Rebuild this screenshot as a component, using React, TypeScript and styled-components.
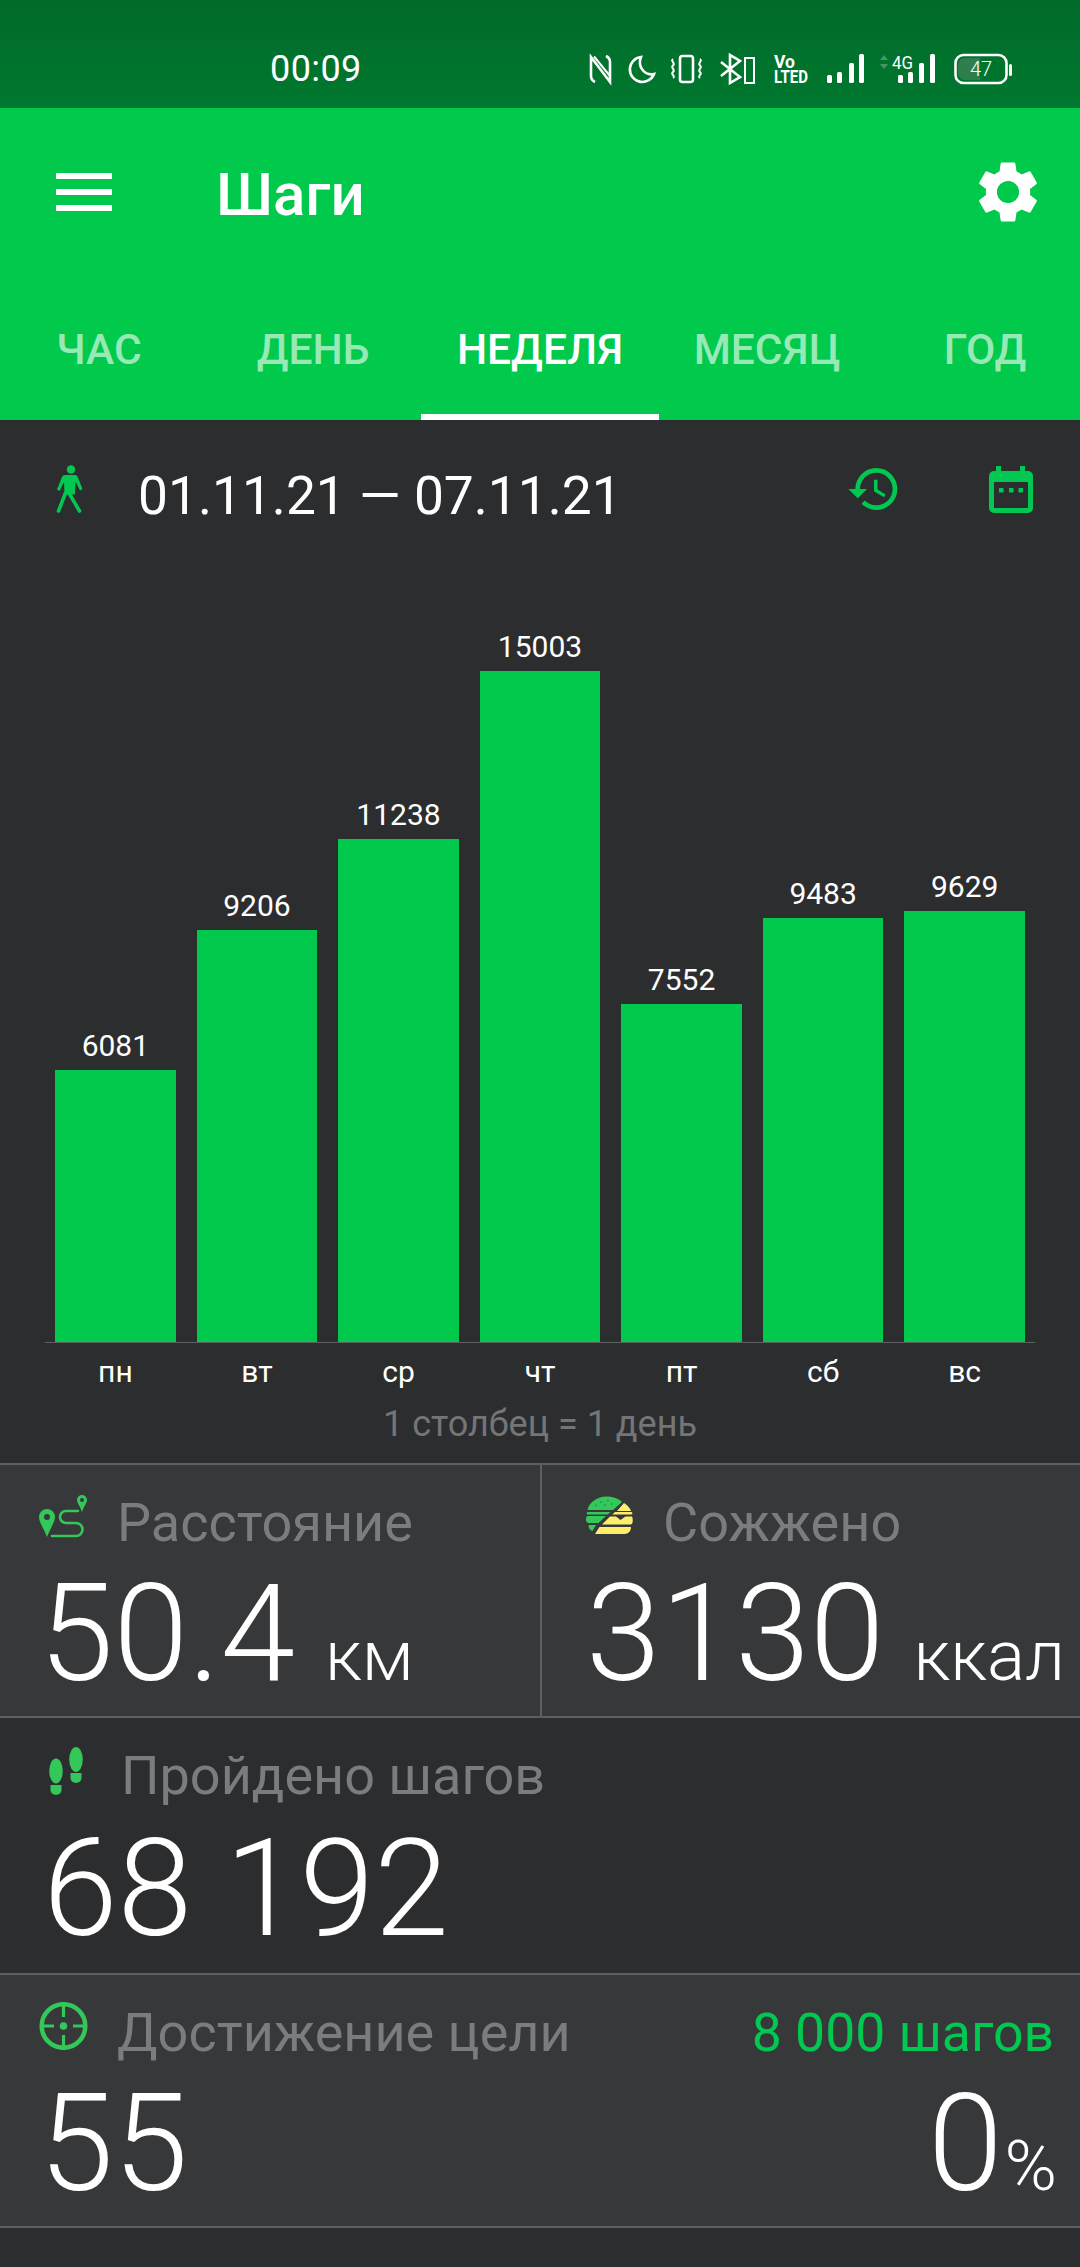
import React from "react";
import styled, { createGlobalStyle } from "styled-components";
import { MdSettings, MdHistory } from "react-icons/md";

const Global = createGlobalStyle`
  html, body { margin: 0; padding: 0; background: #2c2d2f; }
  * { box-sizing: border-box; }
`;

const Page = styled.div`
  width: 1080px;
  height: 2267px;
  overflow: hidden;
  background: #2c2d2f;
  font-family: Roboto, "Noto Sans", sans-serif;
  color: #fff;
`;

const StatusBar = styled.div`
  height: 108px;
  background: linear-gradient(180deg, #006b2a 0%, #00782f 100%);
  display: flex;
  align-items: center;
  padding: 28px 0 0 270px;
`;
const Clock = styled.div`
  font-size: 36px;
  line-height: 44px;
  margin: 2px 216px 0 0;
  letter-spacing: 0.4px;
`;
const StatusIcons = styled.svg`
  width: 440px;
  height: 44px;
  display: block;
  margin-left: auto;
  margin-right: 60px;
`;

const Header = styled.div`
  background: #00c94c;
`;
const Toolbar = styled.div`
  height: 160px;
  display: flex;
  align-items: center;
  padding: 0 35px 0 56px;
`;
const Burger = styled.div`
  width: 56px;
  height: 38px;
  display: flex;
  flex-direction: column;
  justify-content: space-between;
  margin-top: 8px;
  span { display: block; height: 6px; background: #fff; }
`;
const Title = styled.div`
  font-size: 60px;
  font-weight: 500;
  line-height: 70px;
  margin-left: 104px;
  margin-top: 14px;
  flex: 1;
`;
const Gear = styled(MdSettings)`
  width: 74px;
  height: 74px;
  margin-top: 8px;
  color: #fff;
  display: block;
`;
const Tabs = styled.div`
  height: 152px;
  display: flex;
`;
const Tab = styled.div<{ $w: number; $active?: boolean; $shift?: number }>`
  flex: 0 0 ${(p) => p.$w}px;
  height: 152px;
  padding: 58px 0 0 ${(p) => p.$shift ?? 0}px;
  text-align: center;
  font-size: 42.5px;
  line-height: 48px;
  font-weight: 500;
  color: ${(p) => (p.$active ? "#fff" : "rgba(255,255,255,0.6)")};
  border-bottom: 6px solid ${(p) => (p.$active ? "#fff" : "transparent")};
`;

const DateRow = styled.div`
  height: 110px;
  display: flex;
  align-items: center;
  padding: 28px 47px 0 56px;
`;
const DateText = styled.div`
  font-size: 53.3px;
  line-height: 64px;
  margin-left: 55px;
  flex: 1;
  margin-top: 14px;
`;
const HistoryIcon = styled(MdHistory)`
  width: 56px;
  height: 56px;
  color: #00c850;
  display: block;
  margin-right: 87px;
`;
const SmallIcon = styled.svg<{ $top?: number; $left?: number }>`
  display: block;
  flex: none;
  margin-top: ${(p) => p.$top ?? 0}px;
  margin-left: ${(p) => p.$left ?? 0}px;
`;

const Chart = styled.div`
  height: 813px;
  padding: 0 45px;
  display: flex;
  align-items: flex-end;
`;
const Plot = styled.div`
  width: 990px;
  display: flex;
  gap: 20.8px;
  padding: 0 10px;
  border-bottom: 1px solid #5e6062;
  align-items: flex-end;
`;
const Col = styled.div`
  flex: 1;
  display: flex;
  flex-direction: column;
  align-items: center;
`;
const Val = styled.div`
  font-size: 30px;
  line-height: 36px;
  margin-bottom: 6px;
`;
const Bar = styled.div`
  width: 100%;
  background: #00c94c;
`;
const Days = styled.div`
  display: flex;
  gap: 20.8px;
  padding: 0 55px;
  height: 47px;
  align-items: flex-end;
`;
const Day = styled.div`
  flex: 1;
  text-align: center;
  font-size: 30px;
  line-height: 36px;
`;
const Hint = styled.div`
  height: 73px;
  padding-top: 14px;
  text-align: center;
  font-size: 36px;
  line-height: 40px;
  color: #737577;
`;

const Section = styled.div<{ $h: number; $light?: boolean }>`
  height: ${(p) => p.$h}px;
  border-top: 2px solid #5d5f61;
  background: ${(p) => (p.$light ? "#36383a" : "#2c2d2f")};
  display: flex;
`;
const Cell = styled.div<{ $w?: number; $pad?: number; $divider?: boolean }>`
  ${(p) => (p.$w ? `flex: 0 0 ${p.$w}px;` : "flex: 1;")}
  padding: 0 0 0 ${(p) => p.$pad ?? 39}px;
  ${(p) => (p.$divider ? "border-right: 2px solid #5d5f61;" : "")}
  min-width: 0;
`;
const LabelRow = styled.div`
  height: 84px;
  display: flex;
  align-items: center;
  padding-top: 28px;
`;
const Label = styled.div<{ $gap: number }>`
  font-size: 54px;
  line-height: 60px;
  color: #7b7c7e;
  margin-left: ${(p) => p.$gap}px;
  flex: 1;
  margin-top: 4px;
`;
const Goal = styled.div`
  font-size: 53.5px;
  line-height: 60px;
  color: #00c850;
  margin-top: 4px;
  margin-right: 26px;
`;
const ValueRow = styled.div<{ $top: number; $left: number; $right?: number; $between?: boolean }>`
  display: flex;
  align-items: baseline;
  padding: ${(p) => p.$top}px ${(p) => p.$right ?? 27}px 0 ${(p) => p.$left}px;
  white-space: nowrap;
  ${(p) => (p.$between ? "justify-content: space-between;" : "")}
`;
const Big = styled.div`
  font-size: 134.5px;
  line-height: 130px;
  font-weight: 300;
`;
const Unit = styled.div<{ $gap: number }>`
  font-size: 71px;
  font-weight: 300;
  margin-left: ${(p) => p.$gap}px;
`;
const Pair = styled.div`
  display: flex;
  align-items: baseline;
`;

const GREEN = "#00c850";
const SOFT = "#34c759";
const YELLOW = "#ffee6b";

const WalkIcon = () => (
  <SmallIcon width="27" height="48" viewBox="0 0 27 48">
    <circle cx="15" cy="4.500" r="4.200" fill={GREEN} />
    <path d="M9 10h10c1 0 2 .5 2.500 1.500L26.500 24l-2.500 1.500-4.500-9-.5 13H8.500L8 17l-4.500 9L1 24.500 6 12c.5-1.300 1.500-2 3-2z" fill={GREEN} />
    <path d="M9.500 28 2.500 46" stroke={GREEN} strokeWidth="3.600" strokeLinecap="round" />
    <path d="M13 28l10.500 18" stroke={GREEN} strokeWidth="3.600" strokeLinecap="round" />
  </SmallIcon>
);

const CalendarIcon = () => (
  <SmallIcon width="44" height="47" viewBox="0 0 44 47">
    <path d="M7 0h5v5h19V0h5v5h3a5 5 0 0 1 5 5v32a5 5 0 0 1-5 5H5a5 5 0 0 1-5-5V10a5 5 0 0 1 5-5h2zM5 16v26h34V16z" fill={GREEN} fillRule="evenodd" />
    <rect x="10" y="22" width="4.500" height="4.500" fill={GREEN} />
    <rect x="20" y="22" width="4.500" height="4.500" fill={GREEN} />
    <rect x="29.500" y="22" width="4.500" height="4.500" fill={GREEN} />
  </SmallIcon>
);

const RouteIcon = () => (
  <SmallIcon width="50" height="44" viewBox="0 0 50 44" $top={-8}>
    <path d="M8 14a8 8 0 0 1 8 8c0 5-5 12-8 20C5 34 0 27 0 22a8 8 0 0 1 8-8zm0 5a3 3 0 1 0 0 6 3 3 0 0 0 0-6z" fill={SOFT} fillRule="evenodd" />
    <path d="M43 0a5 5 0 0 1 5 5c0 3-3 6-5 12-2-6-5-9-5-12a5 5 0 0 1 5-5zm0 3a2 2 0 1 0 0 4 2 2 0 0 0 0-4z" fill={SOFT} fillRule="evenodd" />
    <path d="M13 41H37a6.500 6.500 0 0 0 0-13H27a6 6 0 0 1 0-12H39" fill="none" stroke={SOFT} strokeWidth="2.600" strokeLinecap="round" />
  </SmallIcon>
);

const BurgerIcon = () => (
  <SmallIcon width="48" height="38" viewBox="0 0 48 38" $top={-12}>
    <path d="M1.500 14C3 6 12 .5 20 .5c6 0 12 1.500 16 5.500l-9 8z" fill={SOFT} />
    <path d="M2 16h22.500l-2.800 2.500H2a1.250 1.250 0 0 1 0-2.500z" fill={SOFT} />
    <path d="M2 20h18l-7.500 7H3c-2 0-3-1-3-3.500S.5 20 2 20z" fill={SOFT} />
    <path d="M2.500 29h7.500l-3.500 6c-2.500-.5-4-3-4-6z" fill={SOFT} />
    <path d="M38 7c3.500 2 6 5 7 8H31z" fill={YELLOW} />
    <path d="M29 16h16a1.250 1.250 0 0 1 0 2.500H26.300z" fill={YELLOW} />
    <path d="M24 20.500h6l4.500 3.500 5-3.500H46c1 2 1.500 8-1.500 8H16z" fill={YELLOW} />
    <path d="M13.500 31H45c0 4-2.500 7-6.500 7H9z" fill={YELLOW} />
    <circle cx="15" cy="6" r=".9" fill="#1f9a45" />
    <circle cx="22" cy="4.500" r=".9" fill="#1f9a45" />
    <circle cx="10" cy="9.500" r=".9" fill="#1f9a45" />
    <circle cx="19" cy="9" r=".9" fill="#1f9a45" />
    <circle cx="26" cy="8" r=".9" fill="#1f9a45" />
  </SmallIcon>
);

const StepsIcon = () => (
  <SmallIcon width="34" height="48" viewBox="0 0 34 48" $top={-6} $left={10}>
    <ellipse cx="7" cy="24" rx="6.800" ry="12.500" fill={SOFT} />
    <path d="M1.500 38h11v5a5.500 5 0 0 1-11 0z" fill={SOFT} />
    <ellipse cx="27" cy="12.500" rx="6.800" ry="12.500" fill={SOFT} />
    <path d="M21.500 26h11v5a5.500 5 0 0 1-11 0z" fill={SOFT} />
  </SmallIcon>
);

const TargetIcon = () => (
  <SmallIcon width="49" height="48" viewBox="0 0 49 48" $top={-10}>
    <circle cx="24.500" cy="24" r="21.800" fill="none" stroke={SOFT} strokeWidth="4.500" />
    <circle cx="24.500" cy="24" r="3.800" fill={SOFT} />
    <path d="M24.500 3v12M24.500 33v12M3 24h12M34 24h12" stroke={SOFT} strokeWidth="3.200" />
  </SmallIcon>
);

const barHeights = [8, 11, 20, 29];

const Sig = ({ xs }: { xs: number[] }) => (
  <g fill="#fff">
    {xs.map((x, i) => (
      <rect key={x} x={x} y={37 - barHeights[i]} width="5" height={barHeights[i]} rx="1.500" />
    ))}
  </g>
);

const Status = () => (
  <StatusIcons viewBox="0 0 440 44">
    <g fill="none" stroke="#fff" strokeWidth="2.600">
      <path d="M15 36Q11 34 11 30V11L30 36V16Q30 12 26 10" />
      <path d="M14 10.500 30 30" strokeWidth="2" />
      <path d="M61 11a12.500 12.500 0 1 0 13 17c-9 2-17-7-13-17z" />
      <rect x="100" y="10" width="13" height="26" rx="2.500" />
      <path d="M93 13c-3 2 3 4 0 6.500s3 4 0 6.500 3 4 0 6M120 13c3 2-3 4 0 6.500s-3 4 0 6.500-3 4 0 6" strokeWidth="2" />
      <path d="M141 16 160 31 150 37V9L160 15 141 30" />
      <rect x="165" y="12" width="9" height="25" strokeWidth="2" />
    </g>
    <text x="194" y="22" fill="#fff" fontFamily="Roboto" fontWeight="700" fontSize="18" textLength="21" lengthAdjust="spacingAndGlyphs">Vo</text>
    <text x="194" y="37" fill="#fff" fontFamily="Roboto" fontWeight="700" fontSize="18" textLength="34" lengthAdjust="spacingAndGlyphs">LTED</text>
    <Sig xs={[247, 257, 269, 279]} />
    <path d="M300 14l4-5 4 5zM300 18l4 5 4-5z" fill="#3e9a62" />
    <text x="312" y="23" fill="#fff" fontFamily="Roboto" fontSize="19" textLength="21" lengthAdjust="spacingAndGlyphs">4G</text>
    <Sig xs={[318, 328, 339, 350]} />
    <rect x="375.500" y="9" width="51" height="28" rx="8" fill="none" stroke="#fff" strokeWidth="2.600" />
    <path d="M385 12h15v22h-15a7 7 0 0 1-7-7v-8a7 7 0 0 1 7-7z" fill="#2d7f4c" />
    <rect x="429" y="18" width="3" height="12" rx="1.500" fill="#fff" />
    <text x="390" y="30" fill="#fff" fontFamily="Roboto" fontSize="20" fontWeight="300">47</text>
  </StatusIcons>
);

const data: [string, number][] = [
  ["пн", 6081],
  ["вт", 9206],
  ["ср", 11238],
  ["чт", 15003],
  ["пт", 7552],
  ["сб", 9483],
  ["вс", 9629],
];

export default function App() {
  return (
    <Page>
      <Global />
      <StatusBar>
        <Clock>00:09</Clock>
        <Status />
      </StatusBar>
      <Header>
        <Toolbar>
          <Burger>
            <span />
            <span />
            <span />
          </Burger>
          <Title>Шаги</Title>
          <Gear />
        </Toolbar>
        <Tabs>
          <Tab $w={198}>ЧАС</Tab>
          <Tab $w={223} $shift={7}>
            ДЕНЬ
          </Tab>
          <Tab $w={238} $active>
            НЕДЕЛЯ
          </Tab>
          <Tab $w={216}>МЕСЯЦ</Tab>
          <Tab $w={220}>ГОД</Tab>
        </Tabs>
      </Header>
      <DateRow>
        <WalkIcon />
        <DateText>01.11.21 — 07.11.21</DateText>
        <HistoryIcon />
        <CalendarIcon />
      </DateRow>
      <Chart>
        <Plot>
          {data.map(([d, v]) => (
            <Col key={d}>
              <Val>{v}</Val>
              <Bar style={{ height: Math.round((v / 15003) * 671) }} />
            </Col>
          ))}
        </Plot>
      </Chart>
      <Days>
        {data.map(([d]) => (
          <Day key={d}>{d}</Day>
        ))}
      </Days>
      <Hint>1 столбец = 1 день</Hint>
      <Section $h={253} $light>
        <Cell $w={542} $divider>
          <LabelRow>
            <RouteIcon />
            <Label $gap={28}>Расстояние</Label>
          </LabelRow>
          <ValueRow $top={20} $left={0}>
            <Big>50.4</Big>
            <Unit $gap={30}>км</Unit>
          </ValueRow>
        </Cell>
        <Cell $pad={44}>
          <LabelRow>
            <BurgerIcon />
            <Label $gap={29}>Сожжено</Label>
          </LabelRow>
          <ValueRow $top={20} $left={0}>
            <Big>3130</Big>
            <Unit $gap={29}>ккал</Unit>
          </ValueRow>
        </Cell>
      </Section>
      <Section $h={257}>
        <Cell>
          <LabelRow>
            <StepsIcon />
            <Label $gap={38}>Пройдено шагов</Label>
          </LabelRow>
          <ValueRow $top={22} $left={4}>
            <Big>68 192</Big>
          </ValueRow>
        </Cell>
      </Section>
      <Section $h={253} $light>
        <Cell>
          <LabelRow>
            <TargetIcon />
            <Label $gap={29}>Достижение цели</Label>
            <Goal>8 000 шагов</Goal>
          </LabelRow>
          <ValueRow $top={20} $left={0} $right={23} $between>
            <Big>55</Big>
            <Pair>
              <Big>0</Big>
              <Unit $gap={2}>%</Unit>
            </Pair>
          </ValueRow>
        </Cell>
      </Section>
      <Section $h={41} />
    </Page>
  );
}
